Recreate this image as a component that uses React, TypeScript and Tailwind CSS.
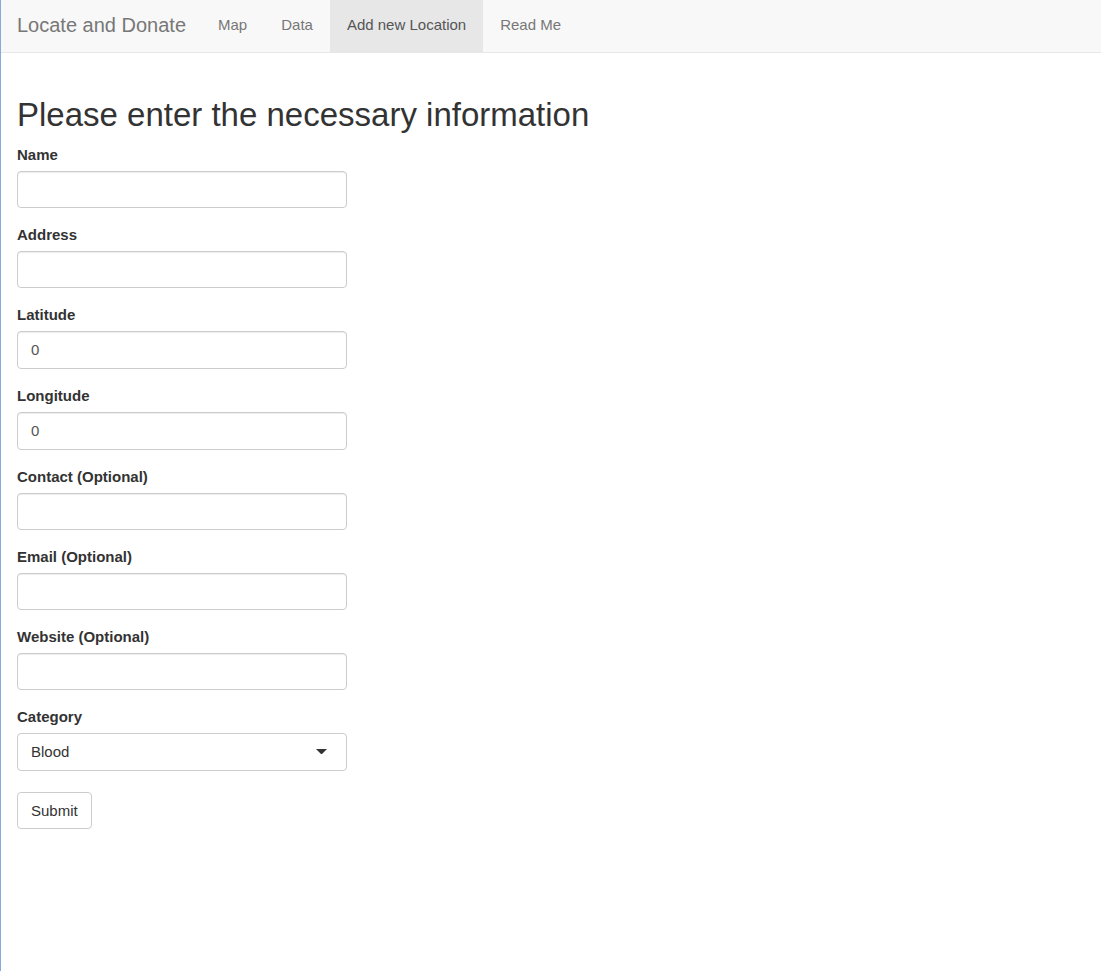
type Field = { id: string; label: string; type: "text" | "number"; value?: number };

const links = ["Map", "Data", "Add new Location", "Read Me"];
const activeLink = "Add new Location";

const fields: Field[] = [
  { id: "name", label: "Name", type: "text" },
  { id: "address", label: "Address", type: "text" },
  { id: "latitude", label: "Latitude", type: "number", value: 0 },
  { id: "longitude", label: "Longitude", type: "number", value: 0 },
  { id: "contact", label: "Contact (Optional)", type: "text" },
  { id: "email", label: "Email (Optional)", type: "text" },
  { id: "website", label: "Website (Optional)", type: "text" },
];

const labelClass = "mb-[5px] text-[15px] leading-[22px] font-bold";
const boxClass = "w-full rounded-[4px] border border-[#cccccc] bg-white px-[13px]";
const insetClass =
  "pb-0.5 text-[#555555] shadow-[inset_0_1px_1px_rgba(0,0,0,0.075)] [appearance:textfield] [&::-webkit-inner-spin-button]:appearance-none";

function Navbar() {
  return (
    <nav className="flex h-[53px] border-b border-[#e7e7e7] bg-[#f8f8f8] text-[#777777]">
      <a href="#home" className="flex items-center pr-[15px] pb-0.5 pl-4 text-[20px] leading-[22px]">
        Locate and Donate
      </a>
      <ul className="flex">
        {links.map((link) => (
          <li key={link} className="flex">
            <a
              href="#section"
              aria-current={link === activeLink ? "page" : undefined}
              className={
                link === activeLink
                  ? "flex items-center bg-[#e7e7e7] px-[17px] pb-0.5 text-[#555555]"
                  : "flex items-center px-[17px] pb-0.5"
              }
            >
              {link}
            </a>
          </li>
        ))}
      </ul>
    </nav>
  );
}

export default function App() {
  return (
    <div className="min-h-screen border-l border-[#8aa8e0] bg-white font-['Liberation_Sans',Arial,sans-serif] text-[15px] leading-[22px] text-[#333333]">
      <Navbar />
      <main className="px-4 pt-[43px] pb-8">
        <h2 className="mb-2.5 text-[33px] leading-[38px]">Please enter the necessary information</h2>
        <form className="flex w-full max-w-[330px] flex-col items-start gap-4" onSubmit={(e) => e.preventDefault()}>
          {fields.map((field) => (
            <div key={field.id} className="flex w-full flex-col">
              <label htmlFor={field.id} className={labelClass}>
                {field.label}
              </label>
              <input
                id={field.id}
                type={field.type}
                defaultValue={field.value}
                className={`${boxClass} ${insetClass} ${field.type === "number" ? "h-[38px]" : "h-[37px]"}`}
              />
            </div>
          ))}
          <div className="flex w-full flex-col">
            <label htmlFor="category" className={labelClass}>
              Category
            </label>
            <div className="relative">
              <select id="category" className={`${boxClass} h-[38px] appearance-none`}>
                <option>Blood</option>
              </select>
              <svg
                aria-hidden="true"
                viewBox="0 0 11 5"
                className="pointer-events-none absolute top-4 right-5 h-[5px] w-[11px] fill-[#333333]"
              >
                <path d="M0 0H11L5.5 5.5Z" />
              </svg>
            </div>
          </div>
          <button type="submit" className="mt-[5px] h-[37px] rounded-[4px] border border-[#cccccc] bg-white px-[13px]">
            Submit
          </button>
        </form>
      </main>
    </div>
  );
}
